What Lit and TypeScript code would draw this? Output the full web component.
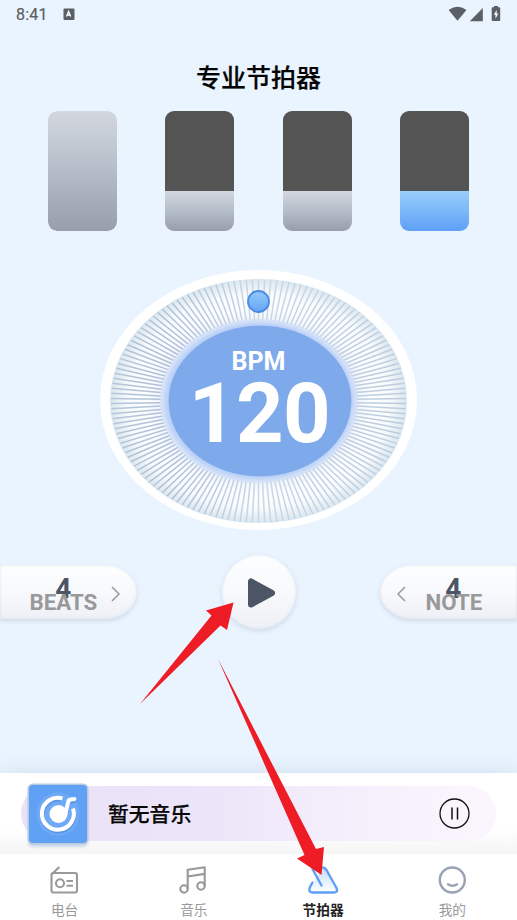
import { LitElement, html, svg, css } from "lit";
import { customElement, property } from "lit/decorators.js";

@customElement("status-bar")
class StatusBar extends LitElement {
  static styles = css`
    :host { display: flex; height: 28px; padding: 0 16px; align-items: center; justify-content: space-between; color: #5b6066; }
    .left { display: flex; align-items: center; height: 28px; }
    .time { font-size: 16px; letter-spacing: 0.2px; font-weight: 400; -webkit-text-stroke: 0.2px #5b6066; width: 46.5px; padding-top: 1px; }
    svg { display: block; }
  `;
  render() {
    return html`
      <div class="left">
        <span class="time">8:41</span>
        <svg width="12" height="13" viewBox="0 0 12 13"><rect x=".5" y=".5" width="11" height="11.500" rx="1" fill="#5b6066" /><path d="M3.500 8.500 5.600 3.500 7.700 8.500M4.300 7h2.600" fill="none" stroke="#fff" stroke-width="1.300" /></svg>
      </div>
      <svg width="52" height="18" viewBox="0 0 52 18">
        <g fill="#5b6066">
          <path d="M-.5 5Q8.500-1.600 17.500 5L8.500 15.800Z" />
          <path d="M33.800 3V16.200H20.800Z" />
          <path d="M45 1h4v1.300h1.300q.9 0 .9.9V15q0 1-.9 1h-6.600q-1 0-1-1V3.200q0-.9.9-.9h1.400z" />
        </g>
        <path d="M47.700 5 44.800 9.700h1.700v4l2.800-5.200h-1.700z" fill="#fff" />
      </svg>
    `;
  }
}

@customElement("beat-bars")
class BeatBars extends LitElement {
  static styles = css`
    :host { display: flex; justify-content: space-between; padding: 0 48px; }
    .bar { width: 69px; height: 120px; border-radius: 9px; overflow: hidden; display: flex; flex-direction: column; background: linear-gradient(#545454 80px, transparent 80px); }
    .fill { margin-top: auto; height: 40px; background: linear-gradient(#d3d7df, #bac3cd 40%, #989eab); }
    .full { height: 120px; border-radius: 9px; }
    .bar:has(.full) { background: none; }
    .accent { background: linear-gradient(#98cffb, #5f9ff6); }
  `;
  render() {
    return html`${["full", "", "", "accent"].map((kind) => html`<div class="bar"><div class="fill ${kind}"></div></div>`)}`;
  }
}

@customElement("tempo-dial")
class TempoDial extends LitElement {
  static styles = css`
    :host { display: flex; justify-content: center; }
    svg { display: block; font-family: Roboto, sans-serif; font-weight: 700; }
  `;
  @property({ type: Number }) bpm = 120;
  render() {
    const count = 150;
    const ticks = Array.from({ length: count }, (_, i) => {
      const a = ((i + 0.5) / count) * Math.PI * 2;
      const c = Math.cos(a), s = Math.sin(a);
      return svg`<line x1=${158.5 + c * 98} y1=${131 + s * 81} x2=${158.5 + c * 147.5} y2=${131 + s * 121.5} />`;
    });
    return html`
      <svg width="317" height="260" viewBox="0 0 317 260">
        <defs>
          <radialGradient id="ring">
            <stop offset=".66" stop-color="#eef3fb" /><stop offset=".76" stop-color="#fdfeff" />
            <stop offset=".88" stop-color="#f8fbfc" /><stop offset="1" stop-color="#d9e6ee" />
          </radialGradient>
          <radialGradient id="halo">
            <stop offset=".87" stop-color="#abc7f5" /><stop offset=".94" stop-color="#c0d4f7" />
            <stop offset="1" stop-color="#cddcf7" stop-opacity=".55" />
          </radialGradient>
          <linearGradient id="tick" gradientUnits="userSpaceOnUse" x1="10" y1="0" x2="307" y2="0">
            <stop offset="0" stop-color="#b4c6d9" /><stop offset=".22" stop-color="#b1c0da" />
            <stop offset=".5" stop-color="#c9d7e5" /><stop offset="1" stop-color="#bccbdf" />
          </linearGradient>
          <linearGradient id="knob" x2="0" y2="1"><stop stop-color="#92cafb" /><stop offset="1" stop-color="#66a4f5" /></linearGradient>
        </defs>
        <ellipse cx="158.500" cy="130" rx="158.500" ry="130" fill="#fff" />
        <ellipse cx="158.500" cy="131" rx="148.500" ry="122" fill="url(#ring)" />
        <g stroke="url(#tick)" stroke-width="1.500">${ticks}</g>
        <ellipse cx="159" cy="131" rx="99" ry="82" fill="url(#halo)" />
        <ellipse cx="160" cy="131" rx="91" ry="75" fill="#7eaaec" stroke="#78a5e9" stroke-width=".7" />
        <circle cx="158.500" cy="31.500" r="10.500" fill="url(#knob)" stroke="#4a8ae2" stroke-width="1.800" />
        <text x="158.500" y="99.700" text-anchor="middle" font-size="25" fill="#fff">BPM</text>
        <text x="159.500" y="172" text-anchor="middle" font-size="83" letter-spacing="-.4" fill="#fff">${this.bpm}</text>
      </svg>
    `;
  }
}

@customElement("beat-controls")
class BeatControls extends LitElement {
  static styles = css`
    :host { display: flex; align-items: center; justify-content: space-between; height: 74px; }
    .pill { display: grid; grid-template-columns: 94px 43px; align-items: center; width: 137px; height: 54px; border-radius: 0 32px 32px 0 / 0 27px 27px 0; background: linear-gradient(#fdfeff, #f8f9fc 50%, #edf0f6); box-shadow: 0 2px 4px #aab4c36b, inset 0 0 3px #bbc2cb66; margin-bottom: 1px; }
    .note { grid-template-columns: 43px 94px; border-radius: 32px 0 0 32px / 27px 0 0 27px; }
    .play { display: grid; place-items: center; width: 74px; height: 74px; border-radius: 50%; background: linear-gradient(#fdfeff, #f8f9fc 50%, #edf0f6); box-shadow: 0 2px 5px #aab4c36b, inset 0 0 3px #bbc2cb50; }
    .play svg { margin: 1px 0 0 6px; }
    .label { display: grid; justify-items: center; align-items: center; font-weight: 700; width: 67px; margin-left: 29.500px; }
    .note .label { width: 56px; margin-left: 2.500px; }
    .value, .name { grid-area: 1 / 1; line-height: 30px; }
    .value { font-size: 28px; color: #4b5566; margin: 0 0 5px 0; }
    .name { font-size: 22.300px; color: #999; margin-top: 21px; }
    .note .value { margin-right: 1px; }
    .chev { justify-self: center; margin-top: 5px; }
    .note .chev { margin-right: 1px; }
    svg { display: block; }
  `;
  render() {
    return html`
      <div class="pill">
        <div class="label"><span class="value">4</span><span class="name">BEATS</span></div>
        <svg class="chev" width="10" height="16" viewBox="0 0 10 16"><path d="M1 1 8 8 1 15" fill="none" stroke="#999" stroke-width="1.500" /></svg>
      </div>
      <div class="play">
        <svg width="32" height="34" viewBox="0 0 32 34"><path d="M5 5.500v23L26 17Z" fill="#4b5566" stroke="#4b5566" stroke-width="6" stroke-linejoin="round" /></svg>
      </div>
      <div class="pill note">
        <svg class="chev" width="10" height="16" viewBox="0 0 10 16"><path d="M9 1 2 8 9 15" fill="none" stroke="#999" stroke-width="1.500" /></svg>
        <div class="label"><span class="value">4</span><span class="name">NOTE</span></div>
      </div>
    `;
  }
}

@customElement("music-player")
class MusicPlayer extends LitElement {
  static styles = css`
    :host { display: flex; align-items: center; height: 81px; padding: 0 21px; background: linear-gradient(#fff 68%, #f5f5f5); box-shadow: 0 0 19px #a9b9cc5c; }
    .track { display: flex; align-items: center; width: 475px; height: 55px; border-radius: 27.5px; background: linear-gradient(90deg, #eae2f8, #ece5f9 40%, #f5effc 70%, #fbf6fe); }
    .art { width: 58px; height: 58px; margin-left: 8px; flex: none; border-radius: 4px; background: #60a0f5; box-shadow: 0 0 0 1.500px #b9c9de, 0 3px 3px 1px #b4c9e6aa; }
    .name { font-size: 20.800px; font-weight: 500; -webkit-text-stroke: 0.250px #080808; color: #080808; margin-left: 21px; margin-top: -2px; flex: 1; }
    .pause { margin-right: 26px; }
    svg { display: block; }
  `;
  render() {
    return html`
      <div class="track">
        <div class="art">
          <svg width="58" height="58" viewBox="1 1 58 58" fill="none">
            <circle cx="30" cy="30" r="21.500" fill="#70aaf6" />
            <g stroke="#4680ce" transform="translate(0 1.500)" opacity=".45"><path d="M33 14.200A16 16 0 1 0 45.500 25" stroke-width="4" /><path d="M36.500 29 41 16h6" stroke-width="4" /></g>
            <path d="M34.500 14.400A16 16 0 1 0 45 24.500" stroke="#fff" stroke-width="4" />
            <circle cx="30.500" cy="30" r="9" fill="#fff" />
            <path d="M37.300 30 40.300 17.500Q40.700 15.500 43 15.400L46.500 14.900" stroke="#fff" stroke-width="4" stroke-linecap="round" stroke-linejoin="round" />
          </svg>
        </div>
        <span class="name">暂无音乐</span>
        <svg class="pause" width="31" height="31" viewBox="0 0 31 31" fill="none" stroke="#111"><circle cx="15.500" cy="15.500" r="14.500" stroke-width="1.300" /><path d="M13 9.500v12M18.500 9.500v12" stroke-width="1.500" /></svg>
      </div>
    `;
  }
}

@customElement("tab-bar")
class TabBar extends LitElement {
  static styles = css`
    :host { display: grid; grid-template-columns: repeat(4, 1fr); height: 66px; background: #fff; }
    .tab { display: flex; flex-direction: column; align-items: center; color: #999; font-size: 13.700px; line-height: 20px; }
    .tab svg { display: block; margin-top: 11px; margin-bottom: 5px; }
    .active { color: #222; font-weight: 700; }
  `;
  render() {
    const icons = [
      svg`<g stroke="#999" stroke-width="2.100" fill="none"><rect x="2.500" y="8" width="25.500" height="19.500" rx="2" /><path d="M3 9 9.800 2.500" stroke-linecap="round" /><path d="M17.500 16h6.500M17.500 20.800h6.500" /><circle cx="11" cy="18.300" r="4" /></g>`,
      svg`<g stroke="#999" stroke-width="2.100" fill="none" stroke-linejoin="round"><circle cx="6" cy="24" r="3.700" /><circle cx="23" cy="21" r="3.700" /><path d="M9.700 24V4.800L26.700 2.200v19M9.700 11.500 26.700 8.900" /></g>`,
      svg`<defs><linearGradient id="metro" x2="0" y2="1"><stop stop-color="#c5ddfc" /><stop offset="1" stop-color="#fff" /></linearGradient></defs><path d="M6.500 16 2.500 23Q1 27.500 5 27.500H26Q31 27.500 29 23L18.500 5Q16 1.500 13 4Z" fill="url(#metro)" /><path d="M4.500 17.500 2 22Q-.2 27.300 4.500 27.500H25.500Q30.500 27.500 28.500 23L18.500 5Q16.500 1.800 12.500 2.500M4.500 4 13.500 20.500" fill="none" stroke="#609ff5" stroke-width="2.400" stroke-linecap="round" />`,
      svg`<g stroke="#98a2b2" fill="none"><circle cx="15.300" cy="15" r="12.500" stroke-width="2.400" /><path d="M11 19.300q4.500 3 9 0" stroke-width="2.400" stroke-linecap="round" /></g>`,
    ];
    return html`${["电台", "音乐", "节拍器", "我的"].map((name, i) => html`
      <div class="tab ${i === 2 ? "active" : ""}"><svg width="31" height="30" viewBox="0 0 31 30">${icons[i]}</svg><span>${name}</span></div>`)}`;
  }
}

@customElement("app-root")
class AppRoot extends LitElement {
  static styles = css`
    :host { display: flex; flex-direction: column; position: relative; width: 517px; height: 920px; overflow: hidden; background: #e9f4ff; font-family: Roboto, "Noto Sans CJK SC", sans-serif; }
    h1 { margin: 31px 0 13px; text-align: center; font-size: 25px; line-height: 39px; font-weight: 500; -webkit-text-stroke: 0.200px #050505; color: #050505; }
    tempo-dial { margin-top: 39px; }
    beat-controls { margin-top: 25px; }
    music-player { margin-top: auto; }
    .arrows { position: absolute; inset: 0; pointer-events: none; }
  `;
  render() {
    return html`
      <status-bar></status-bar>
      <h1>专业节拍器</h1>
      <beat-bars></beat-bars>
      <tempo-dial .bpm=${120}></tempo-dial>
      <beat-controls></beat-controls>
      <music-player></music-player>
      <tab-bar></tab-bar>
      <svg class="arrows" width="517" height="920" viewBox="0 0 517 920" fill="#ee1c25">
        <path d="M140 704 211.500 615.500 206 610.500 233.500 602.500 227 630 220.500 625.500Z" />
        <path d="M218 659 316 849 324 847 321.500 875 297 858.500 304.500 855Z" />
      </svg>
    `;
  }
}
